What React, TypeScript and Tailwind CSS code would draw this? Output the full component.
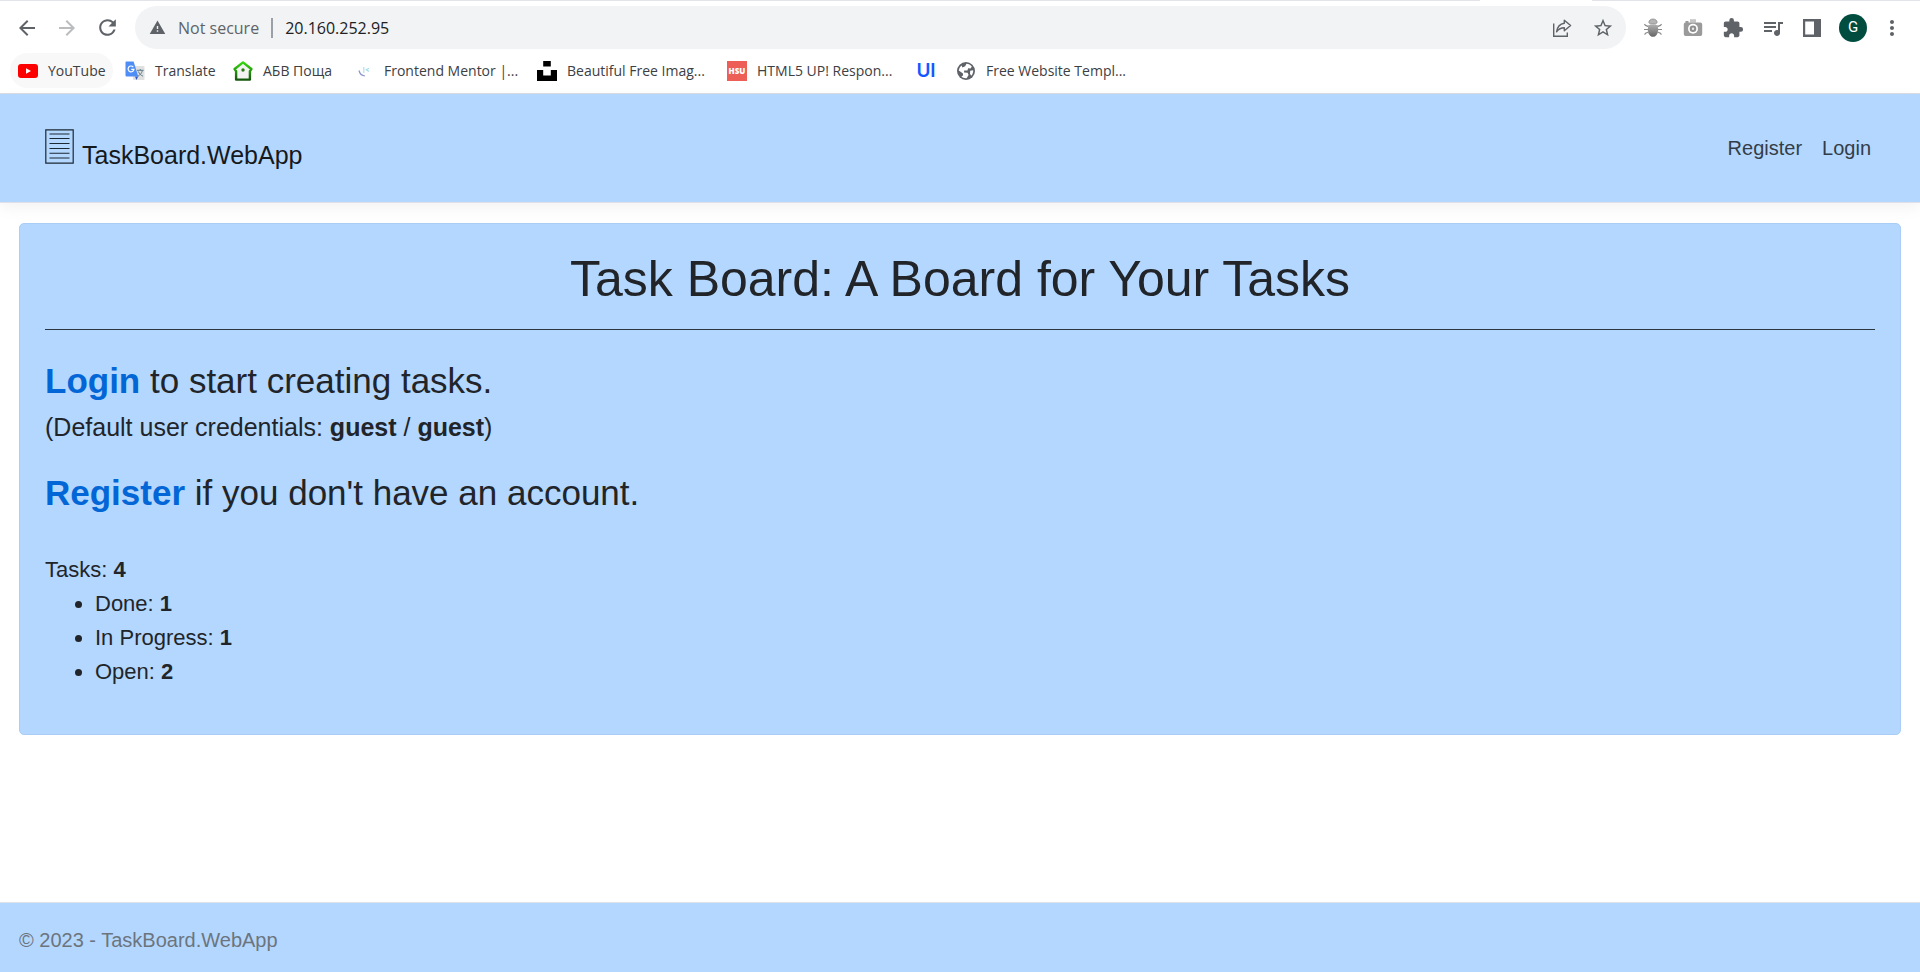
import type { ReactNode } from "react";
import {
  MdArrowBack,
  MdArrowForward,
  MdExtension,
  MdMoreVert,
  MdQueueMusic,
  MdRefresh,
  MdStarBorder,
  MdWarning,
} from "react-icons/md";

function ShareIcon() {
  return (
    <svg width="20" height="20" viewBox="0 0 20 20" fill="none" stroke="#5f6368" strokeWidth="1.4">
      <path d="M1.7 5.5V18.3H15.3V14.5" />
      <path d="M12.3 2.2L18.6 7.5L12.3 12.8V9.8C9 9.8 6.6 11 4.6 13.8C5.2 9.4 7.8 6 12.3 5.3Z" strokeLinejoin="round" />
    </svg>
  );
}

function BugIcon() {
  return (
    <svg width="20" height="20" viewBox="0 0 20 20">
      <defs>
        <linearGradient id="shell" x1="0" y1="0" x2="0" y2="1">
          <stop offset="0" stopColor="#b0b0b0" />
          <stop offset="1" stopColor="#666" />
        </linearGradient>
      </defs>
      <path
        d="M5.5 8.6L2.6 7.4L1.4 6.2M5 11.5H1M5.5 14L2.6 15.2L1.6 16.6M14.5 8.6L17.4 7.4L18.6 6.2M15 11.5H19M14.5 14L17.4 15.2L18.4 16.6"
        stroke="#8a8a8a"
        strokeWidth="1.2"
        fill="none"
      />
      <path d="M5.8 4.6C6 2.4 7.6 1 10 1S14 2.4 14.2 4.6L12.6 6H7.4Z" fill="#b4b4b4" stroke="#8c8c8c" strokeWidth=".8" />
      <path d="M5.2 7.2Q10 5.6 14.8 7.2Q15.8 12 14.4 15.4Q12.8 18.8 10 18.8T5.6 15.4Q4.2 12 5.2 7.2Z" fill="url(#shell)" />
    </svg>
  );
}

function CameraIcon() {
  return (
    <svg width="20" height="20" viewBox="0 0 20 20">
      <rect x="7" y="1.2" width="6" height="3.4" fill="#c6c6c6" />
      <path d="M2.5 3H5.5V4.4H17.2Q19.2 4.4 19.2 6.4V16.2Q19.2 18 17.4 18H2.6Q.8 18 .8 16.2V6.4Q.8 4.6 2.5 4.4Z" fill="#9a9a9a" />
      <circle cx="10" cy="10.8" r="5" fill="#fff" />
      <circle cx="10" cy="10.8" r="3.3" fill="#8f8f8f" />
      <circle cx="10" cy="10.8" r="1.2" fill="#e6e6e6" />
    </svg>
  );
}

function SidePanelIcon() {
  return (
    <svg width="18" height="18" viewBox="0 0 18 18">
      <path fillRule="evenodd" d="M0 0H18V18H0ZM2.2 2.4V15.6H11V2.4Z" fill="#5f6368" />
    </svg>
  );
}

function YouTubeIcon() {
  return (
    <svg width="20" height="20" viewBox="0 0 20 20">
      <rect x="0" y="3" width="20" height="14" rx="3" fill="#f00" />
      <path d="M8 7.2L13 10L8 12.8Z" fill="#fff" />
    </svg>
  );
}

function TranslateIcon() {
  return (
    <svg width="20" height="20" viewBox="0 0 20 20">
      <rect x="8" y="5" width="11.5" height="14" rx="1" fill="#e0e0e0" />
      <path d="M12 9.3H18.6M15.2 8V9.3M17.4 9.5C16.8 12 15.2 14 12.8 15.4M13.4 10.5C14.3 12.8 16 14.4 18 15.2" stroke="#607d8b" strokeWidth="1" fill="none" />
      <path d="M10 15.5H13.2L11.4 19Z" fill="#2a56c6" />
      <path d="M1.2 .5H8.6L13.3 15.5H1.6Q.5 15.5 .5 14.4V1.4Q.5 .5 1.2 .5Z" fill="#4f8df6" />
      <path d="M8.3 6.1A2.9 2.9 0 1 0 8.9 8.3H6.2" stroke="#fff" strokeWidth="1.2" fill="none" />
    </svg>
  );
}

function HouseIcon() {
  return (
    <svg width="20" height="20" viewBox="0 0 20 20">
      <defs>
        <linearGradient id="house" x1="0" y1="0" x2="0" y2="1">
          <stop offset="0" stopColor="#35d80c" />
          <stop offset="1" stopColor="#14570d" />
        </linearGradient>
      </defs>
      <path d="M10 1.4L18.4 8L16.9 10.2V18.6H3.1V10.2L1.6 8Z" fill="#f3f3f3" stroke="url(#house)" strokeWidth="2.4" strokeLinejoin="round" />
      <circle cx="10" cy="9" r="1.7" fill="#2a7d12" />
    </svg>
  );
}

function MentorIcon() {
  return (
    <svg width="20" height="20" viewBox="0 0 20 20" fill="none">
      <path d="M5 9.5C5.7 12.8 7.8 14.6 10.8 14.8" stroke="#8f9bd0" strokeWidth="1.3" />
      <path d="M9.8 6V12" stroke="#b9e3ee" strokeWidth="1.3" />
      <path d="M15 7.2L12.3 8.8L15 10.4" stroke="#a5dce6" strokeWidth="1.2" />
    </svg>
  );
}

function BlocksIcon() {
  return (
    <svg width="20" height="20" viewBox="0 0 20 20">
      <path d="M6.2 0H13.8V5.6H6.2ZM0 9H6.2V14.6H13.8V9H20V20H0Z" fill="#000" />
    </svg>
  );
}

function GlobeIcon() {
  return (
    <svg width="20" height="20" viewBox="0 0 20 20">
      <circle cx="10" cy="10" r="9" fill="#5f6368" />
      <path d="M10.4 2.8C12.6 2.8 14.6 3.9 15.8 5.6L14.6 7.4L12.2 7.2L11.4 9.4L8.2 9.6L8 11.4L11.6 11.8L12.6 14L10.6 17.2C8 17.4 6.6 16.6 5.4 15.6L7 14.4V12.6L2.8 9.6C3 7.4 4 5.6 5.6 4.4L6.4 6.4L9.2 5.2Z" fill="#fff" />
      <path d="M14.2 9.8L17.2 9.2C17.3 11.4 16.6 13.4 15.2 14.8L14 12.8Z" fill="#fff" />
    </svg>
  );
}

function DocumentIcon() {
  return (
    <svg width="29" height="35" viewBox="0 0 29 35" fill="none" stroke="#1c2833">
      <path d="M.8 .8H28.2V34.2H.8Z" strokeWidth="1.2" />
      <path d="M4.5 5H24.5M4.5 9.5H24.5M4.5 14.5H24.5M4.5 19.5H24.5M4.5 24.2H24.5M4.5 29H24.5" strokeWidth="1.1" />
    </svg>
  );
}

const bookmarks: { icon: ReactNode; label: string; width: string }[] = [
  { icon: <YouTubeIcon />, label: "YouTube", width: "w-[57px]" },
  { icon: <TranslateIcon />, label: "Translate", width: "w-[58px]" },
  { icon: <HouseIcon />, label: "АБВ Поща", width: "w-[71px]" },
  { icon: <MentorIcon />, label: "Frontend Mentor |...", width: "w-[133px]" },
  { icon: <BlocksIcon />, label: "Beautiful Free Imag...", width: "w-[140px]" },
  {
    icon: <span className="flex size-5 items-center justify-center bg-[#ed5f56] font-['Open_Sans',sans-serif] text-[8px] font-extrabold text-white">HSU</span>,
    label: "HTML5 UP! Respon...",
    width: "w-[139px]",
  },
  { icon: <span className="block w-5 text-center font-['Inter',sans-serif] text-[19px] leading-5 font-semibold text-[#1557ff]">UI</span>, label: "", width: "" },
  { icon: <GlobeIcon />, label: "Free Website Templ...", width: "w-[140px]" },
];

function BrowserBar() {
  return (
    <div className="border-b border-[#dadce0] bg-white font-['Open_Sans','Noto_Sans',sans-serif]">
      <div className="flex h-px justify-end">
        <span className="grow bg-[#e2e4ea]" />
        <span className="w-28" />
        <span className="w-82 bg-[#e2e4ea]" />
      </div>
      <div className="flex items-center pt-[5px] pr-[18px] pl-[15px] text-[#5f6368]">
        <div className="mr-[15px] flex gap-4">
          <button aria-label="Back"><MdArrowBack size={24} /></button>
          <button aria-label="Forward" className="text-[#babcbe]"><MdArrowForward size={24} /></button>
          <button aria-label="Reload"><MdRefresh size={25} /></button>
        </div>
        <div className="flex h-[43px] grow items-center rounded-full bg-[#f1f3f4] pr-1 pl-[14px]">
          <MdWarning size={17} />
          <span className="ml-3 text-base whitespace-nowrap">Not secure</span>
          <span className="mx-3 h-5 w-0.5 bg-[#9aa0a6]" />
          <input aria-label="Address" defaultValue="20.160.252.95" className="min-w-0 grow bg-transparent text-base text-[#202124] outline-none" />
          <div className="flex items-center gap-5 pr-2">
            <button aria-label="Share"><ShareIcon /></button>
            <button aria-label="Bookmark"><MdStarBorder size={22} /></button>
          </div>
        </div>
        <div className="ml-[17px] flex items-center gap-5">
          <button aria-label="Bug report"><BugIcon /></button>
          <button aria-label="Camera"><CameraIcon /></button>
          <button aria-label="Extensions" className="-mx-px"><MdExtension size={22} /></button>
          <button aria-label="Media" className="-mx-0.5"><MdQueueMusic size={24} /></button>
          <button aria-label="Side panel"><SidePanelIcon /></button>
          <button aria-label="Profile" className="-mx-0.5 flex size-7 items-center justify-center rounded-full bg-[#004d40] font-['Roboto',sans-serif] text-[15px] text-white">G</button>
          <button aria-label="Menu" className="-mr-0.5 -ml-[5px]"><MdMoreVert size={24} /></button>
        </div>
      </div>
      <nav aria-label="Bookmarks" className="mt-1 mb-[5px] flex h-[35px] items-stretch gap-1 pl-2.5 text-sm text-[#3c4043]">
        {bookmarks.map((b, i) => (
          <a
            key={b.label}
            href="#"
            aria-label={b.label || "UI"}
            className={"flex items-center gap-2.5 rounded-full px-2 whitespace-nowrap " + (i === 0 ? "bg-[#f8f8f9]" : "")}
          >
            {b.icon}
            {b.label && <span className={b.width}>{b.label}</span>}
          </a>
        ))}
      </nav>
    </div>
  );
}

function Count({ label, value }: { label: string; value: number }) {
  return (
    <>
      {label}: <b>{value}</b>
    </>
  );
}

export default function App() {
  return (
    <div className="flex min-h-screen flex-col bg-white font-['Liberation_Sans',Arial,sans-serif] text-[#212529]">
      <BrowserBar />
      <header className="flex h-[109px] items-center justify-between border-b border-[#dee2e6] bg-[#b4d7ff] pr-[49px] pl-[45px] shadow-[0_5px_15px_rgba(0,0,0,0.05)]">
        <a href="#" className="flex items-baseline gap-2 pt-2 text-[25px] leading-10 text-[#16191c]">
          <DocumentIcon />
          TaskBoard.WebApp
        </a>
        <nav className="flex gap-5 text-xl leading-[30px] text-[#333d47]">
          <a href="#">Register</a>
          <a href="#">Login</a>
        </nav>
      </header>
      <main className="mx-[19px] mt-5 mb-auto rounded-[5px] border border-[#a9cdf5] bg-[#b4d7ff] px-[25px] pt-[25px] pb-[45px]">
        <h1 className="text-center text-[50px] leading-[60px]">Task Board: A Board for Your Tasks</h1>
        <hr className="mt-5 border-[#2b3640]" />
        <h2 className="mt-[30px] text-[35px] leading-[42px]">
          <a href="#" className="font-bold text-[#0366d6]">Login</a> to start creating tasks.
        </h2>
        <p className="mt-2.5 text-[25px] leading-[30px]">
          (Default user credentials: <b>guest</b> / <b>guest</b>)
        </p>
        <h2 className="mt-[30px] text-[35px] leading-[42px]">
          <a href="#" className="font-bold text-[#0366d6]">Register</a> if you don't have an account.
        </h2>
        <div className="mt-[39px] text-[22px] leading-[34px]">
          <p><Count label="Tasks" value={4} /></p>
          <ul className="list-disc pl-[50px]">
            <li><Count label="Done" value={1} /></li>
            <li><Count label="In Progress" value={1} /></li>
            <li><Count label="Open" value={2} /></li>
          </ul>
        </div>
      </main>
      <footer className="border-t border-[#dee2e6] bg-[#b4d7ff] px-[19px] pt-[22px] pb-[17px] text-xl leading-[30px] text-[#6c757d]">
        © 2023 - TaskBoard.WebApp
      </footer>
    </div>
  );
}
